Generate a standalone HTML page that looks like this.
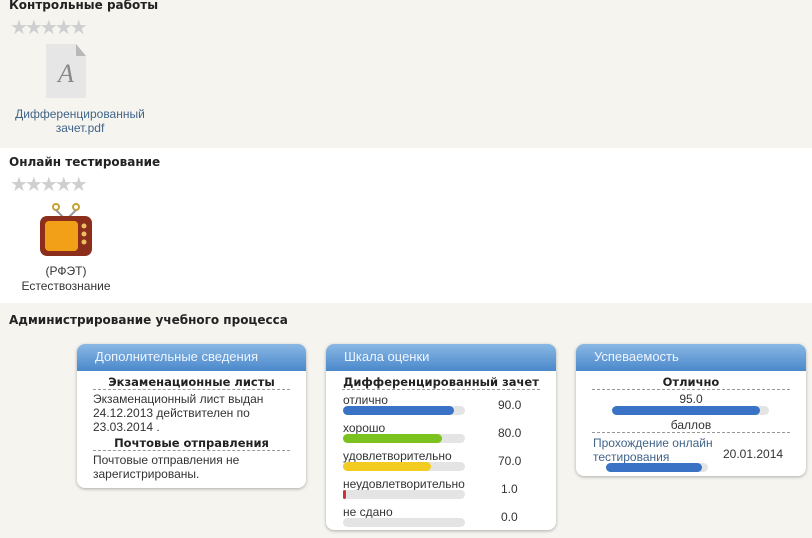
<!DOCTYPE html>
<html><head><meta charset="utf-8"><style>
*{margin:0;padding:0;box-sizing:border-box}
body{width:812px;height:538px;overflow:hidden;background:#f5f4ef;font-family:"Liberation Sans","DejaVu Sans",sans-serif;font-size:12px;color:#333;position:relative}
.abs{position:absolute}
.h{font-weight:bold;font-size:12px;color:#222;font-family:"DejaVu Sans",sans-serif}
.stars{color:#cfcfcf;font-size:20px;letter-spacing:-3px;line-height:18px}
.box{position:absolute;background:#fff;border-radius:8px;box-shadow:0 1px 3px rgba(0,0,0,.3);overflow:hidden}
.bh{height:27px;background:linear-gradient(#8ab8e4,#4a88cb);color:#eef5ff;font-size:13px;padding:5px 0 0 18px}
.sub{font-weight:bold;text-align:center;border-bottom:1px dashed #999;margin:0 16px;color:#222;padding-top:4px;font-family:"DejaVu Sans",sans-serif;font-size:11.5px}
.bar{position:absolute;height:9px;border-radius:5px;background:#e4e4e4}
.bar i{display:block;height:9px;border-radius:5px}
</style></head><body>
<div class="abs" style="left:0;top:148px;width:812px;height:155px;background:#fff"></div>
<div class="abs h" style="left:9px;top:-2px">Контрольные работы</div>
<div class="abs stars" style="left:10px;top:19px">★★★★★</div>
<svg class="abs" style="left:42px;top:42px" width="48" height="58"><path d="M4 2h30l10 12v42H4z" fill="#e6e6e6"/><path d="M34 2v12h10z" fill="#b8b8b8"/><text x="24" y="40" font-family="Liberation Serif" font-style="italic" font-size="26" fill="#888" text-anchor="middle">A</text></svg>
<div class="abs" style="left:0;top:107px;width:160px;text-align:center;color:#41658a;line-height:14px">Дифференцированный<br>зачет.pdf</div>
<div class="abs h" style="left:9px;top:155px">Онлайн тестирование</div>
<div class="abs stars" style="left:10px;top:176px">★★★★★</div>
<svg class="abs" style="left:38px;top:202px" width="56" height="56"><circle cx="18" cy="5" r="3" fill="none" stroke="#c9a030" stroke-width="2"/><circle cx="38" cy="5" r="3" fill="none" stroke="#c9a030" stroke-width="2"/><path d="M18 8l8 8M38 8l-8 8" stroke="#999" stroke-width="2"/><rect x="2" y="14" width="52" height="40" rx="7" fill="#8b2f1c"/><rect x="7" y="19" width="33" height="30" rx="4" fill="#f2a018"/><circle cx="46" cy="24" r="2.5" fill="#e8c060"/><circle cx="46" cy="32" r="2.5" fill="#e8c060"/><circle cx="46" cy="40" r="2.5" fill="#e8c060"/></svg>
<div class="abs" style="left:0;top:264px;width:132px;text-align:center;color:#333;line-height:15px">(РФЭТ)<br>Естествознание</div>
<div class="abs h" style="left:9px;top:313px">Администрирование учебного процесса</div>

<div class="box" style="left:77px;top:344px;width:229px;height:144px">
<div class="bh">Дополнительные сведения</div>
<div class="sub">Экзаменационные листы</div>
<div style="padding:2px 16px;line-height:14px">Экзаменационный лист выдан 24.12.2013 действителен по 23.03.2014 .</div>
<div class="sub" style="padding-top:0">Почтовые отправления</div>
<div style="padding:2px 16px;line-height:14px">Почтовые отправления не зарегистрированы.</div>
</div>

<div class="box" style="left:326px;top:344px;width:230px;height:186px">
<div class="bh">Шкала оценки</div>
<div class="sub">Дифференцированный зачет</div>
<div class="abs" style="left:17px;top:49px">отлично</div><div class="abs" style="left:172px;top:54px">90.0</div>
<div class="bar" style="left:17px;top:62px;width:122px"><i style="width:111px;background:#3a73c6"></i></div>
<div class="abs" style="left:17px;top:77px">хорошо</div><div class="abs" style="left:172px;top:82px">80.0</div>
<div class="bar" style="left:17px;top:90px;width:122px"><i style="width:99px;background:#7cc21e"></i></div>
<div class="abs" style="left:17px;top:105px">удовлетворительно</div><div class="abs" style="left:172px;top:110px">70.0</div>
<div class="bar" style="left:17px;top:118px;width:122px"><i style="width:88px;background:#f2cc20"></i></div>
<div class="abs" style="left:17px;top:133px">неудовлетворительно</div><div class="abs" style="left:175px;top:138px">1.0</div>
<div class="bar" style="left:17px;top:146px;width:122px"><i style="width:3px;background:#c33"></i></div>
<div class="abs" style="left:17px;top:161px">не сдано</div><div class="abs" style="left:175px;top:166px">0.0</div>
<div class="bar" style="left:17px;top:174px;width:122px"></div>
</div>

<div class="box" style="left:576px;top:344px;width:230px;height:132px">
<div class="bh">Успеваемость</div>
<div class="sub">Отлично</div>
<div style="text-align:center;padding-top:2px">95.0</div>
<div class="bar" style="left:36px;top:62px;width:157px"><i style="width:148px;background:#3a73c6"></i></div>
<div style="text-align:center;margin:0 16px;padding-top:12px;border-bottom:1px dashed #999">баллов</div>
<div class="abs" style="left:17px;top:92px;color:#41658a;line-height:14px">Прохождение онлайн<br>тестирования</div>
<div class="abs" style="left:147px;top:103px">20.01.2014</div>
<div class="bar" style="left:30px;top:119px;width:102px"><i style="width:96px;background:#3a73c6"></i></div>
</div>
</body></html>
